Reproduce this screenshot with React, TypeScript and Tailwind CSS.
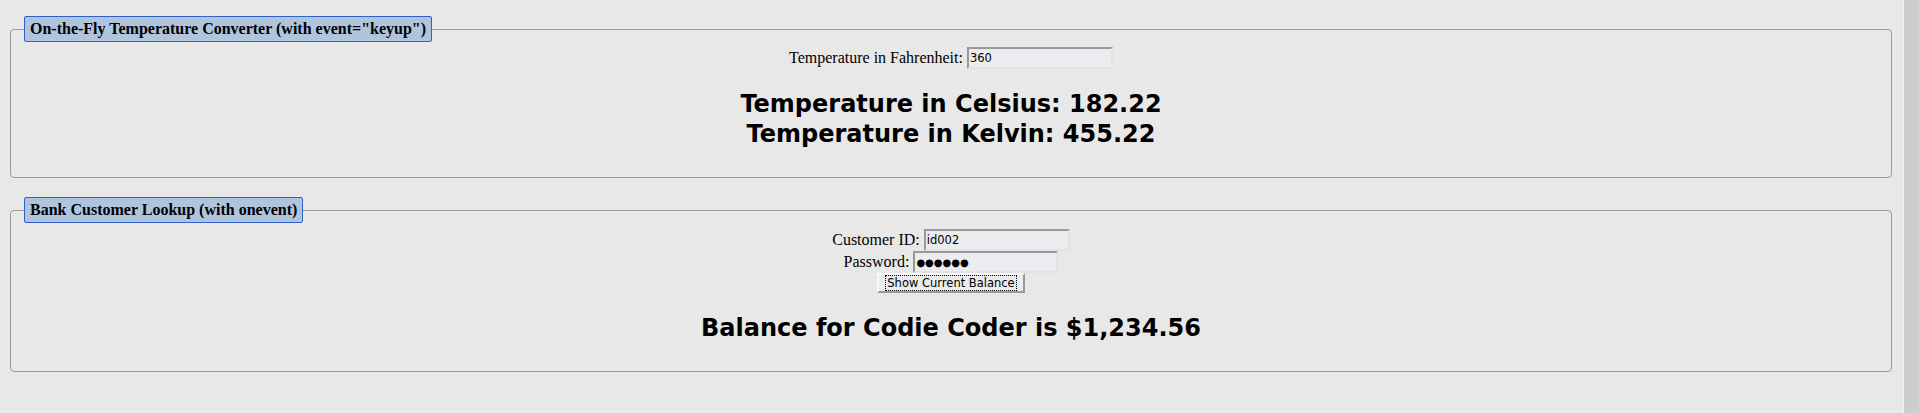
import { useState } from "react";

const serif = "font-['Liberation_Serif',serif]";
const sans = "font-['DejaVu_Sans',sans-serif]";

function Legend({ children }: { children: React.ReactNode }) {
  return (
    <legend
      className={`${serif} font-bold text-[16px] leading-[18px] text-black bg-[#b0c4de] border border-[#2f62c4] rounded-[2px] px-[5px] py-[3px]`}
    >
      {children}
    </legend>
  );
}

function TextBox({
  value,
  onChange,
  width = "w-[146px]",
  size = "text-[11.5px]",
}: {
  value: string;
  onChange: (v: string) => void;
  width?: string;
  size?: string;
}) {
  return (
    <input
      type="text"
      value={value}
      onChange={(e) => onChange(e.target.value)}
      className={`${sans} ${width} ${size} h-[22px] text-black bg-[#ececf0] px-[1px] border-2 border-t-[#999999] border-l-[#999999] border-r-[#e2e2e2] border-b-[#e2e2e2] outline-none`}
    />
  );
}

function TempConverter() {
  const [fahr, setFahr] = useState("360");
  const f = parseFloat(fahr);
  const c = isNaN(f) ? 0 : ((f - 32) * 5) / 9;
  const k = c + 273;

  return (
    <fieldset className="mt-[16px] ml-[10px] mr-[11px] px-[13px] pb-[28px] border border-[#9a9a9a] rounded-[4px]">
      <Legend>On-the-Fly Temperature Converter (with event="keyup")</Legend>
      <div className={`${serif} mt-[5px] h-[22px] flex items-center justify-center gap-[4px] text-[16px] text-black`}>
        <span>Temperature in Fahrenheit:</span>
        <TextBox value={fahr} onChange={setFahr} />
      </div>
      <div className={`${sans} mt-[20px] text-center font-bold text-[24px] leading-[30px] text-black`}>
        <div>Temperature in Celsius: {c.toFixed(2)}</div>
        <div>Temperature in Kelvin: {k.toFixed(2)}</div>
      </div>
    </fieldset>
  );
}

function BankLookup() {
  const [id, setId] = useState("id002");
  const [pw, setPw] = useState("●●●●●●");

  return (
    <fieldset className="mt-[19px] ml-[10px] mr-[11px] px-[13px] pb-[28px] border border-[#9a9a9a] rounded-[4px]">
      <Legend>Bank Customer Lookup (with onevent)</Legend>
      <div className={`${serif} mt-[6px] flex flex-col items-center text-[16px] text-black`}>
        <div className="h-[22px] flex items-center gap-[4px]">
          <span>Customer ID:</span>
          <TextBox value={id} onChange={setId} />
        </div>
        <div className="h-[22px] flex items-center gap-[4px]">
          <span>Password:</span>
          <TextBox value={pw} onChange={setPw} width="w-[145px]" size="text-[10px]" />
        </div>
        <button
          className={`${sans} h-[20px] px-[6px] flex items-center text-[11.5px] text-black bg-[#ebebeb] border-2 border-t-[#fafafa] border-l-[#fafafa] border-r-[#9a9a9a] border-b-[#9a9a9a]`}
        >
          <span className="border border-dotted border-black px-[1px] leading-[14px]">Show Current Balance</span>
        </button>
      </div>
      <div className={`${sans} mt-[20px] text-center font-bold text-[24px] leading-[30px] text-black`}>
        Balance for Codie Coder is $1,234.56
      </div>
    </fieldset>
  );
}

export default function App() {
  return (
    <div className="flex w-full h-[413px] bg-[#e8e8e8] overflow-hidden">
      <div className="flex-1 flex flex-col">
        <TempConverter />
        <BankLookup />
      </div>
      <div className="w-[16px] h-full bg-[#cdcdcd] border-l border-[#f0f0f0]" />
    </div>
  );
}
